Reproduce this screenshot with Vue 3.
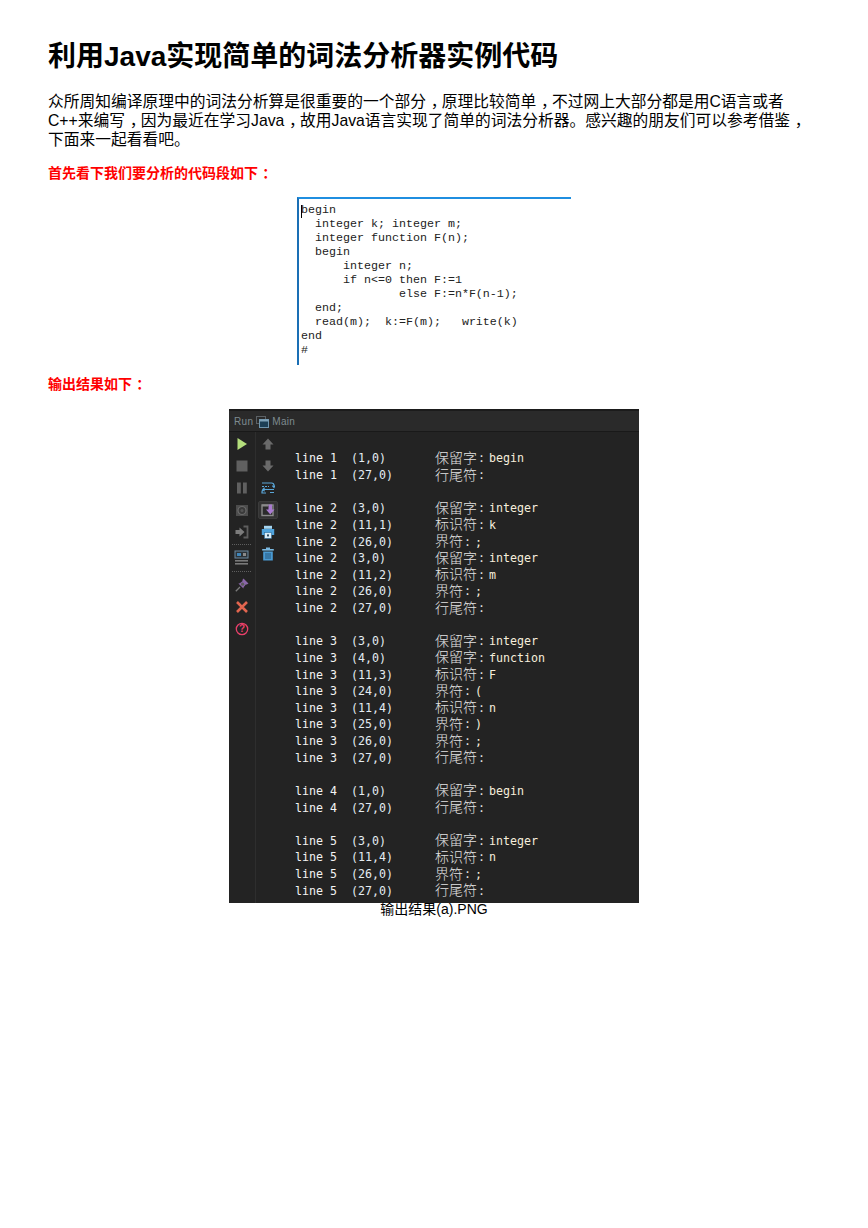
<script setup>
const codeLines = [
  'begin',
  '  integer k; integer m;',
  '  integer function F(n);',
  '  begin',
  '      integer n;',
  '      if n<=0 then F:=1',
  '              else F:=n*F(n-1);',
  '  end;',
  '  read(m);  k:=F(m);   write(k)',
  'end',
  '#'
]
const rows = [
  ['line 1', '(1,0)', '保留字', 'begin'],
  ['line 1', '(27,0)', '行尾符', ''],
  null,
  ['line 2', '(3,0)', '保留字', 'integer'],
  ['line 2', '(11,1)', '标识符', 'k'],
  ['line 2', '(26,0)', '界符', ';'],
  ['line 2', '(3,0)', '保留字', 'integer'],
  ['line 2', '(11,2)', '标识符', 'm'],
  ['line 2', '(26,0)', '界符', ';'],
  ['line 2', '(27,0)', '行尾符', ''],
  null,
  ['line 3', '(3,0)', '保留字', 'integer'],
  ['line 3', '(4,0)', '保留字', 'function'],
  ['line 3', '(11,3)', '标识符', 'F'],
  ['line 3', '(24,0)', '界符', '('],
  ['line 3', '(11,4)', '标识符', 'n'],
  ['line 3', '(25,0)', '界符', ')'],
  ['line 3', '(26,0)', '界符', ';'],
  ['line 3', '(27,0)', '行尾符', ''],
  null,
  ['line 4', '(1,0)', '保留字', 'begin'],
  ['line 4', '(27,0)', '行尾符', ''],
  null,
  ['line 5', '(3,0)', '保留字', 'integer'],
  ['line 5', '(11,4)', '标识符', 'n'],
  ['line 5', '(26,0)', '界符', ';'],
  ['line 5', '(27,0)', '行尾符', '']
]
</script>

<template>
  <main class="page">
    <h1 class="title">利用Java实现简单的词法分析器实例代码</h1>
    <p class="intro">众所周知编译原理中的词法分析算是很重要的一个部分<span class="fw">，</span>原理比较简单<span class="fw">，</span>不过网上大部分都是用C语言或者<br>C++来编写<span class="fw">，</span>因为最近在学习Java<span class="fw">，</span>故用Java语言实现了简单的词法分析器。感兴趣的朋友们可以参考借鉴<span class="fw">，</span><br>下面来一起看看吧。</p>
    <p class="note first">首先看下我们要分析的代码段如下<span class="fw">：</span></p>
    <div class="code-shot">
      <div v-for="(l, i) in codeLines" :key="i" class="code-line">{{ l }}</div>
    </div>
    <p class="note second">输出结果如下<span class="fw">：</span></p>
    <div class="run-shot">
      <header class="run-head">
        <span>Run</span>
        <svg width="13" height="12" viewBox="0 0 13 12"><rect x="0.5" y="0.5" width="9" height="7" fill="none" stroke="#5c6266"/><rect x="3.5" y="3.5" width="9" height="8" fill="#1d3f55" stroke="#6f95ad"/><rect x="3.5" y="3.5" width="9" height="2" fill="#7fa2b8"/></svg>
        <span>Main</span>
      </header>
      <div class="run-body">
        <aside class="rail rail-a">
          <svg width="14" height="14" viewBox="0 0 14 14"><path d="M2.5 1 L12 7 L2.5 13 Z" fill="#b4de7c"/></svg>
          <svg width="14" height="14" viewBox="0 0 14 14"><rect x="1.5" y="1.5" width="11" height="11" fill="#606060"/></svg>
          <svg width="14" height="14" viewBox="0 0 14 14"><rect x="2" y="1.5" width="3.8" height="11" fill="#606060"/><rect x="8" y="1.5" width="3.8" height="11" fill="#606060"/></svg>
          <svg width="14" height="14" viewBox="0 0 14 14"><rect x="1" y="2" width="12" height="11" fill="#4c4c4c"/><circle cx="7" cy="7.5" r="4" fill="#3a3a3a" stroke="#6a6a6a" stroke-width="1.2"/><circle cx="7" cy="7.5" r="1.6" fill="#555"/></svg>
          <svg width="14" height="14" viewBox="0 0 14 14"><path d="M8.5 1.5 H12.5 V12.5 H8.5" fill="none" stroke="#5e5e5e" stroke-width="1.8"/><path d="M0.5 5 H4.5 V2.5 L9.5 7 L4.5 11.5 V9 H0.5 Z" fill="#7c7c7c"/></svg>
          <div class="dots dots-a"></div>
          <svg width="15" height="15" viewBox="0 0 15 15"><rect x="1" y="1" width="13" height="7" fill="#2c3338" stroke="#6c8aa0"/><rect x="3" y="3" width="4" height="3" fill="#3f86ba"/><rect x="9" y="3" width="3" height="3" fill="#8a8a8a"/><rect x="1" y="10" width="13" height="1.6" fill="#7a7a7a"/><rect x="1" y="13" width="13" height="1.6" fill="#7a7a7a"/></svg>
          <div class="dots dots-b"></div>
          <svg width="14" height="14" viewBox="0 0 14 14"><path d="M8.5 0.5 L13.5 5.5 L11.8 6.6 L10.8 6.4 L8.6 9.2 L8.4 10.6 L3.4 5.6 L4.8 5.3 L7.6 3.1 L7.4 2.1 Z" fill="#8a66a8"/><circle cx="7.6" cy="6.2" r="1.6" fill="#5b5b5b"/><path d="M5 9 L0.8 13.2" stroke="#7a7a7a" stroke-width="1.3"/></svg>
          <svg width="14" height="14" viewBox="0 0 14 14"><path d="M2 2 L12 12 M12 2 L2 12" stroke="#e2654f" stroke-width="2.6"/></svg>
          <svg width="14" height="14" viewBox="0 0 14 14"><circle cx="7" cy="7" r="5.7" fill="none" stroke="#e8406a" stroke-width="1.3"/><text x="7" y="10.4" text-anchor="middle" class="qmark">?</text></svg>
        </aside>
        <aside class="rail rail-b">
          <svg width="14" height="14" viewBox="0 0 14 14"><path d="M7 1.5 L12.5 7.5 H9.5 V12.5 H4.5 V7.5 H1.5 Z" fill="#6a6a6a"/></svg>
          <svg width="14" height="14" viewBox="0 0 14 14"><path d="M7 12.5 L12.5 6.5 H9.5 V1.5 H4.5 V6.5 H1.5 Z" fill="#6a6a6a"/></svg>
          <svg width="14" height="14" viewBox="0 0 14 14"><path d="M1 2 H10.5 Q13 2 13 4.5 V6 M11.3 4.6 L13 6.4 L14 4.6" fill="none" stroke="#5aa6d8" stroke-width="1.2"/><path d="M1 5.5 H8" stroke="#5aa6d8" stroke-dasharray="2 1"/><path d="M13 8.5 H3.5 Q1 8.5 1 11 V12 H5 M3.6 6.8 L1.8 8.5 L3.6 10.2 M9 11.5 H13" fill="none" stroke="#5aa6d8" stroke-width="1.2"/></svg>
          <div class="active-tool">
            <svg width="14" height="14" viewBox="0 0 14 14"><rect x="1" y="2" width="11" height="10.5" fill="#2b2b2b" stroke="#8a8a8a" stroke-width="1.4"/><rect x="1" y="1.5" width="6" height="2" fill="#8a8a8a"/><path d="M7.5 1.5 H11 V6.5 H13.5 L9.3 11.5 L5 6.5 H7.5 Z" fill="#a97bd0"/></svg>
          </div>
          <svg width="14" height="14" viewBox="0 0 14 14"><rect x="3" y="0.8" width="8" height="3" fill="#a5d6f2"/><rect x="0.8" y="4" width="12.4" height="6" fill="#4fa3dc"/><rect x="3.5" y="7.6" width="7" height="5.8" fill="#d8ecf8" stroke="#2f6f9c" stroke-width="0.6"/><rect x="6" y="9.4" width="2" height="2" fill="#2f4f66"/></svg>
          <svg width="14" height="14" viewBox="0 0 14 14"><rect x="5" y="0.5" width="4" height="1.6" fill="#7ab8e0"/><rect x="1.2" y="2" width="11.6" height="1.6" fill="#7ab8e0"/><path d="M2.2 4.5 H11.8 V13.5 H2.2 Z" fill="#4a9ad2"/><path d="M5 6 V12 M7 6 V12 M9 6 V12" stroke="#1f4f73" stroke-width="0.9"/></svg>
        </aside>
        <div class="out">
          <template v-for="(r, i) in rows" :key="i">
            <div v-if="r" class="out-row">
              <span class="c-line">{{ r[0] }}</span>
              <span class="c-pos">{{ r[1] }}</span>
              <span class="cjk">{{ r[2] }}</span>
              <span class="colon">:</span>
              <span class="c-val">{{ r[3] }}</span>
            </div>
            <div v-else class="out-row"></div>
          </template>
        </div>
      </div>
    </div>
    <p class="caption">输出结果(a).PNG</p>
  </main>
</template>

<style>
html, body { background: #fff; }
</style>

<style scoped>
.page {
  width: 868px;
  height: 1228px;
  box-sizing: border-box;
  padding: 38px 40px 0 48px;
  overflow: hidden;
  font-family: "Liberation Sans", "Noto Sans CJK SC", sans-serif;
  color: #000;
}
.title {
  margin: 0;
  font-size: 28px;
  line-height: 37px;
  font-weight: 700;
}
.intro {
  margin: 17px 0 0;
  font-size: 15.75px;
  line-height: 19.2px;
  white-space: nowrap;
}
.fw {
  display: inline-block;
  box-sizing: border-box;
  width: 1em;
  padding-left: 0.3em;
  font-feature-settings: "halt";
}
.note {
  margin: 0;
  font-size: 14px;
  line-height: 17px;
  font-weight: 700;
  color: #f00;
}
.first { margin-top: 15px; }
.second { margin-top: 11px; }
.code-shot {
  position: relative;
  width: 274px;
  height: 168px;
  margin: 15px 0 0 249px;
  box-sizing: border-box;
  padding: 4px 0 0 2px;
  border-top: 2px solid #1f8ee0;
  border-left: 2px solid #1a6fb5;
  font-family: "Liberation Mono", monospace;
  font-size: 11.67px;
  line-height: 14px;
  color: #222;
}
.code-shot::before {
  content: "";
  position: absolute;
  left: 2px;
  top: 6px;
  width: 1px;
  height: 13px;
  background: #000;
}
.code-line { white-space: pre; height: 14px; }
.run-shot {
  width: 410px;
  height: 494px;
  margin: 16px 0 0 181px;
  background: #232323;
  overflow: hidden;
  font-family: "DejaVu Sans Mono", monospace;
}
.run-head {
  height: 23px;
  box-sizing: border-box;
  border-top: 2px solid #1b1b1b;
  border-bottom: 1px solid #191919;
  background: #2a2a2a;
  padding: 2px 0 0 5px;
  display: flex;
  align-items: center;
  gap: 3px;
  font-family: "Liberation Sans", sans-serif;
  font-size: 10px;
  letter-spacing: 0.3px;
  color: #7e8a90;
}
.run-body { display: flex; height: 471px; }
.rail {
  flex: none;
  box-sizing: border-box;
  display: flex;
  flex-direction: column;
  align-items: center;
  padding-top: 5px;
  gap: 8px;
}
.rail-a {
  width: 27px;
  padding-right: 1px;
  border-right: 1px solid #2e2e2e;
}
.rail-b { width: 24px; }
.dots {
  width: 19px;
  height: 0;
  border-top: 1px dotted #5e5e5e;
}
.dots-a { margin: -3px 0; }
.dots-b { margin: -2px 0; }
.active-tool {
  width: 20px;
  height: 18px;
  margin: -2px 0;
  display: flex;
  align-items: center;
  justify-content: center;
  background: #333;
  border: 1px solid #3c3c3c;
  box-sizing: border-box;
  border-radius: 2px;
}
.qmark { font: 700 10px "Liberation Sans", sans-serif; fill: #e8406a; }
.out {
  padding: 18.5px 0 0 15px;
  font-size: 11.63px;
  color: #f4f4f4;
}
.out-row {
  display: flex;
  align-items: center;
  height: 16.63px;
  line-height: 14px;
  white-space: pre;
}
.c-line { width: 56px; }
.c-pos { width: 84px; color: #e4ecf2; }
.cjk {
  font-family: "Noto Sans CJK SC", sans-serif;
  font-size: 14px;
  line-height: 14px;
  font-weight: 300;
  color: #e2e2e2;
  margin-bottom: 3px;
}
.colon { width: 12px; padding-left: 1px; box-sizing: border-box; color: #e2e2e2; }
.c-val { color: #f6eedc; }
.caption {
  margin: -2px 0 0 181px;
  width: 410px;
  text-align: center;
  font-size: 14px;
  line-height: 16px;
}
</style>
